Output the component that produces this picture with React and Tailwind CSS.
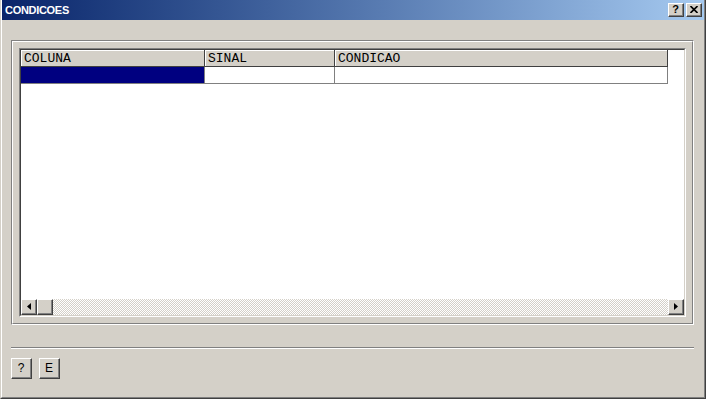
import React from 'react';

const raised =
  'bg-[#d4d0c8] border border-t-white border-l-white border-r-[#404040] border-b-[#404040]';

function Btn3D({ className = '', children }) {
  return (
    <div className={`${raised} ${className}`}>
      <div className="w-full h-full flex items-center justify-center border-r border-b border-[#808080]">
        {children}
      </div>
    </div>
  );
}

function Arrow({ dir }) {
  return (
    <svg width="4" height="7" viewBox="0 0 4 7">
      {dir === 'left' ? (
        <path d="M4 0 L0 3.5 L4 7 Z" fill="#000" />
      ) : (
        <path d="M0 0 L4 3.5 L0 7 Z" fill="#000" />
      )}
    </svg>
  );
}

const cols = [
  { label: 'COLUNA', w: 'w-[184px]' },
  { label: 'SINAL', w: 'w-[130px]' },
  { label: 'CONDICAO', w: 'w-[333px]' },
];

export default function App() {
  return (
    <div className="w-[706px] h-[399px] border-l border-l-[#d4d0c8] border-r border-b border-r-[#404040] border-b-[#404040]">
      <div className="w-full h-full flex flex-col bg-[#d4d0c8] border-l border-l-white border-r border-b border-r-[#808080] border-b-[#808080]">
        {/* title bar */}
        <div className="h-[20px] shrink-0 flex items-center justify-between pl-[3px] pr-[2px] bg-gradient-to-r from-[#0a246a] to-[#a6caf0]">
          <span className="text-white font-bold text-[11px] tracking-[-0.3px] leading-none" style={{ fontFamily: '"Liberation Sans", Arial, sans-serif' }}>
            CONDICOES
          </span>
          <div className="flex gap-[2px]">
            <Btn3D className="w-[16px] h-[14px]">
              <span className="font-bold text-[11px] leading-none text-black" style={{ fontFamily: '"Liberation Sans", Arial, sans-serif' }}>?</span>
            </Btn3D>
            <Btn3D className="w-[16px] h-[14px]">
              <svg width="8" height="7" viewBox="0 0 8 7">
                <path d="M0.5 0 L7.5 7 M7.5 0 L0.5 7" stroke="#000" strokeWidth="1.6" />
              </svg>
            </Btn3D>
          </div>
        </div>

        {/* body */}
        <div className="flex-1 flex flex-col pl-[9px] pr-[10px] pt-[20px]">
          {/* group box (etched) */}
          <div className="h-[285px] border border-t-[#808080] border-l-[#808080] border-r-white border-b-white">
            <div className="w-full h-full p-[6px] border border-t-white border-l-white border-r-[#808080] border-b-[#808080]">
              {/* grid, sunken */}
              <div className="w-full h-full border border-t-[#808080] border-l-[#808080] border-r-white border-b-white">
                <div className="w-full h-full flex flex-col bg-white border border-t-[#404040] border-l-[#404040] border-r-[#d4d0c8] border-b-[#d4d0c8]">
                  {/* header */}
                  <div className="flex h-[17px] shrink-0" style={{ fontFamily: '"Liberation Mono", "Courier New", monospace' }}>
                    {cols.map((c) => (
                      <div
                        key={c.label}
                        className={`${c.w} bg-[#d4d0c8] border-r border-b border-r-[#404040] border-b-[#404040]`}
                      >
                        <div className="h-full border-t border-l border-white pl-[2px] text-[13px] leading-[15px] text-black">
                          {c.label}
                        </div>
                      </div>
                    ))}
                  </div>
                  {/* row */}
                  <div className="flex h-[17px] shrink-0">
                    <div className="w-[184px] bg-[#000080] border-r border-b border-[#808080]" />
                    <div className="w-[130px] border-r border-b border-[#808080]" />
                    <div className="w-[333px] border-r border-b border-[#808080]" />
                  </div>
                  <div className="flex-1" />
                  {/* horizontal scrollbar */}
                  <div className="h-[16px] shrink-0 flex">
                    <Btn3D className="w-[16px] h-[16px]">
                      <Arrow dir="left" />
                    </Btn3D>
                    <Btn3D className="w-[16px] h-[16px]" />
                    <div className="flex-1 bg-[repeating-conic-gradient(#d4d0c8_0_25%,#ffffff_0_50%)] bg-[length:2px_2px]" />
                    <Btn3D className="w-[16px] h-[16px]">
                      <Arrow dir="right" />
                    </Btn3D>
                  </div>
                </div>
              </div>
            </div>
          </div>

          {/* separator */}
          <div className="mt-[22px] h-[2px] border-t border-t-[#808080] border-b border-b-white" />

          {/* bottom buttons */}
          <div className="mt-[9px] flex gap-[7px]" style={{ fontFamily: '"Liberation Sans", Arial, sans-serif' }}>
            <Btn3D className="w-[21px] h-[21px]">
              <span className="text-[12px] leading-none text-black">?</span>
            </Btn3D>
            <Btn3D className="w-[21px] h-[21px]">
              <span className="text-[12px] leading-none text-black">E</span>
            </Btn3D>
          </div>
        </div>
      </div>
    </div>
  );
}
